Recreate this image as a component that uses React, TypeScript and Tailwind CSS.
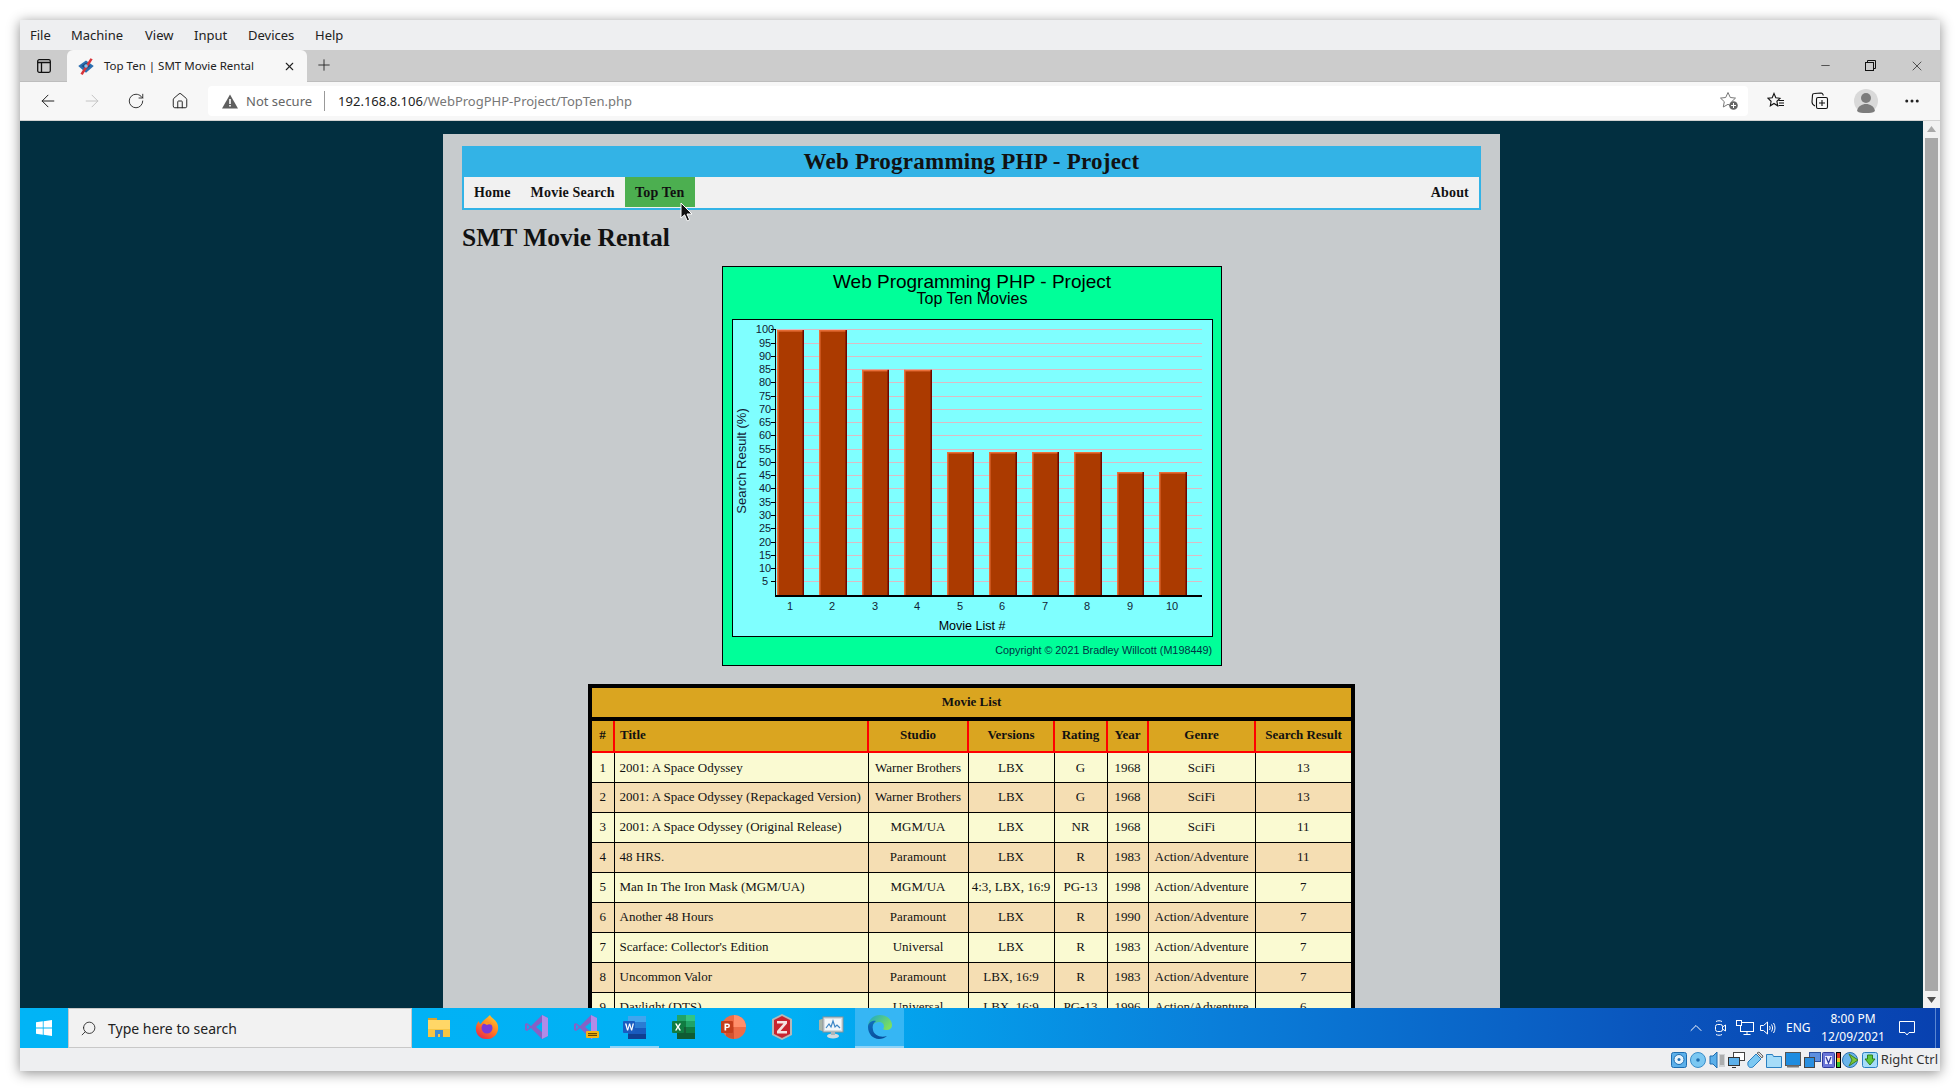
import React from 'react';
import { ArrowLeft, ArrowRight, RotateCw, Home, Plus, X, Minus, Search, ChevronUp, MoreHorizontal } from 'lucide-react';

const menuItems = [
  { label: 'File', cls: 'w-[41px]' },
  { label: 'Machine', cls: 'w-[74px]' },
  { label: 'View', cls: 'w-[49px]' },
  { label: 'Input', cls: 'w-[54px]' },
  { label: 'Devices', cls: 'w-[67px]' },
  { label: 'Help', cls: 'w-[40px]' },
];

const movies = [
  ['1', '2001: A Space Odyssey', 'Warner Brothers', 'LBX', 'G', '1968', 'SciFi', '13'],
  ['2', '2001: A Space Odyssey (Repackaged Version)', 'Warner Brothers', 'LBX', 'G', '1968', 'SciFi', '13'],
  ['3', '2001: A Space Odyssey (Original Release)', 'MGM/UA', 'LBX', 'NR', '1968', 'SciFi', '11'],
  ['4', '48 HRS.', 'Paramount', 'LBX', 'R', '1983', 'Action/Adventure', '11'],
  ['5', 'Man In The Iron Mask (MGM/UA)', 'MGM/UA', '4:3, LBX, 16:9', 'PG-13', '1998', 'Action/Adventure', '7'],
  ['6', 'Another 48 Hours', 'Paramount', 'LBX', 'R', '1990', 'Action/Adventure', '7'],
  ['7', "Scarface: Collector's Edition", 'Universal', 'LBX', 'R', '1983', 'Action/Adventure', '7'],
  ['8', 'Uncommon Valor', 'Paramount', 'LBX, 16:9', 'R', '1983', 'Action/Adventure', '7'],
  ['9', 'Daylight (DTS)', 'Universal', 'LBX, 16:9', 'PG-13', '1996', 'Action/Adventure', '6'],
];

const headers = ['#', 'Title', 'Studio', 'Versions', 'Rating', 'Year', 'Genre', 'Search Result'];
const colWidths = ['w-[22px]', 'w-[254px]', 'w-[100px]', 'w-[86px]', 'w-[53px]', 'w-[41px]', 'w-[107px]', 'w-[96px]'];

const bars = [
  { x: 55, w: 27, v: 99.7 },
  { x: 97, w: 28, v: 99.7 },
  { x: 140, w: 27, v: 84.7 },
  { x: 182, w: 28, v: 84.7 },
  { x: 225, w: 27, v: 53.75 },
  { x: 267, w: 28, v: 53.75 },
  { x: 310, w: 27, v: 53.75 },
  { x: 352, w: 28, v: 53.75 },
  { x: 395, w: 27, v: 46.2 },
  { x: 437, w: 28, v: 46.2 },
];

const ticks = Array.from({ length: 20 }, (_, i) => (i + 1) * 5);
const yOf = (v: number) => 328.6 - v * 2.653;

function Chart() {
  return (
    <svg width="500" height="400" viewBox="0 0 500 400" className="block font-['Liberation_Sans',sans-serif]">
      <rect x="0.5" y="0.5" width="499" height="399" fill="#00ff99" stroke="#000" />
      <text x="250" y="22" textAnchor="middle" fontSize="19" fill="#000">Web Programming PHP - Project</text>
      <text x="250" y="38" textAnchor="middle" fontSize="16" fill="#000">Top Ten Movies</text>
      <rect x="10.5" y="53.5" width="480" height="317" fill="#7fffff" stroke="#000" />
      {ticks.map((t) => (
        <g key={t}>
          <line x1="49" x2="480" y1={Math.round(yOf(t)) + 0.5} y2={Math.round(yOf(t)) + 0.5} stroke="#dcbcc4" />
          <line x1="49" x2="53" y1={Math.round(yOf(t)) + 0.5} y2={Math.round(yOf(t)) + 0.5} stroke="#000" />
          <text x="43" y={yOf(t) + 4} textAnchor="middle" fontSize="11" fill="#123">{t}</text>
        </g>
      ))}
      {bars.map((b, i) => {
        const top = yOf(b.v);
        return (
          <g key={i}>
            <rect x={b.x} y={top} width={b.w} height={329 - top} fill="#ab3a00" />
            <rect x={b.x} y={top} width={b.w} height="1.5" fill="#ea6f38" />
            <rect x={b.x} y={top} width="1.5" height={329 - top} fill="#ea6f38" />
            <rect x={b.x + b.w - 1.5} y={top} width="1.5" height={329 - top} fill="#6e0800" />
            <text x={b.x + 13} y="344" textAnchor="middle" fontSize="11" fill="#123">{i + 1}</text>
          </g>
        );
      })}
      <line x1="53.5" x2="53.5" y1="63" y2="330" stroke="#000" />
      <rect x="53" y="329" width="427" height="2" fill="#000" />
      <text x="250" y="364" textAnchor="middle" fontSize="12.5" fill="#000">Movie List #</text>
      <text transform="translate(24 195) rotate(-90)" textAnchor="middle" fontSize="13" fill="#123">Search Result (%)</text>
      <text x="490" y="388" textAnchor="end" fontSize="10.8" fill="#034">Copyright © 2021 Bradley Willcott (M198449)</text>
    </svg>
  );
}

function MovieTable() {
  return (
    <div className="w-[767px] mx-auto mt-[18px] border-4 border-black bg-black font-['Liberation_Serif',serif] text-[13px] text-[#111]">
      <div className="h-[29px] mb-1 pb-[2px] bg-[#daa520] flex items-center justify-center font-bold">Movie List</div>
      <table className="w-full table-fixed border-collapse">
        <colgroup>
          {colWidths.map((c, i) => (
            <col key={i} className={c} />
          ))}
        </colgroup>
        <thead>
          <tr className="h-[31px] bg-[#daa520]">
            {headers.map((h, i) => (
              <th
                key={h}
                className={`border-b-2 border-b-[#ff0000] p-0 pb-[2px] font-bold border-r-2 border-r-[#ff0000] last:border-r-0 ${i === 1 ? 'text-left pl-[5px]' : 'text-center'}`}
              >
                {h}
              </th>
            ))}
          </tr>
        </thead>
        <tbody>
          {movies.map((row, r) => (
            <tr key={r} className={`h-[30px] ${r === 1 || r === 3 || r === 5 || r === 7 ? 'bg-[#f5deb3]' : 'bg-[#fafad2]'}`}>
              {row.map((c, i) => (
                <td
                  key={i}
                  className={`p-0 border-b border-b-black border-r border-r-black last:border-r-0 whitespace-nowrap ${i === 1 ? 'text-left pl-[5px]' : 'text-center'}`}
                >
                  {c}
                </td>
              ))}
            </tr>
          ))}
        </tbody>
      </table>
    </div>
  );
}

function Cursor() {
  return (
    <svg className="absolute left-[55px] top-[25px]" width="13" height="20" viewBox="0 0 13 20">
      <path d="M1 1v15l3.6-3.2 2.6 6 2.4-1-2.6-5.8H12z" fill="#111" stroke="#fff" strokeWidth="1" />
    </svg>
  );
}

function Page() {
  return (
    <div className="w-[1057px] mx-auto mt-[13px] px-[19px] pt-3 pb-10 bg-[#c7cbcd] font-['Liberation_Serif',serif] text-[#111]">
      <div className="h-[31px] pt-[2px] bg-[#33b3e6] flex items-center justify-center font-bold text-[23px] tracking-[0.25px]">
        Web Programming PHP - Project
      </div>
      <nav className="h-[33px] pb-[1px] bg-[#f1f1f1] border-2 border-t-0 border-[#33b3e6] flex font-bold text-[14px] tracking-[0.2px]">
        <a className="px-2.5 flex items-center">Home</a>
        <a className="px-2.5 flex items-center">Movie Search</a>
        <a className="relative w-[70px] justify-center bg-[#4caf50] flex items-center">
          Top Ten
          <Cursor />
        </a>
        <a className="ml-auto px-2.5 flex items-center">About</a>
      </nav>
      <h1 className="mt-[15px] h-[26px] leading-[26px] font-bold text-[25.5px]">SMT Movie Rental</h1>
      <div className="w-[500px] mx-auto mt-[15px]">
        <Chart />
      </div>
      <MovieTable />
    </div>
  );
}

function TabIcon() {
  return (
    <svg width="18" height="20" viewBox="0 0 16 18">
      <path d="M1 9l7-5 7 5-7 6z" fill="#2c6fb0" />
      <path d="M4 9l4-3 4 3-4 3z" fill="#1a4a80" />
      <path d="M3 16L12 2l2 1L5 17z" fill="#d8343a" />
      <circle cx="8" cy="9" r="1.6" fill="#7fc4f0" />
    </svg>
  );
}

function FolderIcon() {
  return (
    <svg width="24" height="24" viewBox="0 0 24 24">
      <path d="M1 3h9v3H1z" fill="#d8a22c" />
      <path d="M1 5h22v17H1z" fill="#ffd767" />
      <path d="M1 14h22v8H1z" fill="#f6c544" />
      <path d="M8 15h8v7h-3v-3h-2v3H8z" fill="#3a8fd6" />
    </svg>
  );
}

function FirefoxIcon() {
  return (
    <svg width="26" height="26" viewBox="0 0 26 26">
      <defs>
        <linearGradient id="ff" x1="0.8" y1="0" x2="0.2" y2="1">
          <stop offset="0" stopColor="#ffcb2e" />
          <stop offset="0.5" stopColor="#ff7a22" />
          <stop offset="1" stopColor="#e8254e" />
        </linearGradient>
      </defs>
      <path d="M15 1c1 3 5 4 7 8 3 6 0 15-9 16S0 19 1 13c.3-2 1-4 3-6 0 2 1 3 2 3 1-3 5-5 9-9z" fill="url(#ff)" />
      <circle cx="12" cy="14" r="5.5" fill="#7b39d8" />
      <path d="M8 9c3-2 7-1 9 2-2-1-4-1-5 0z" fill="#ff9a1f" />
    </svg>
  );
}

function VsIcon({ pre }: { pre?: boolean }) {
  return (
    <svg width="26" height="26" viewBox="0 0 26 26">
      <path d="M18 1l6 3v18l-6 3-11-11-4 3-2-1V10l2-1 4 3z" fill="#8661c5" />
      <path d="M18 1l6 3v18l-6 3z" fill="#b18be8" />
      <path d="M18 8v10l-6-5z" fill="#00b4f5" />
      <path d="M3 10.5v5l2.5-2.5z" fill="#00b4f5" />
      {pre && <rect x="13" y="17" width="13" height="7" rx="1" fill="#f5b316" />}
      {pre && <path d="M15 19h9v1.2h-9zM15 21h9v1h-9z" fill="#6b4b00" />}
    </svg>
  );
}

function WordIcon() {
  return (
    <svg width="26" height="26" viewBox="0 0 26 26">
      <path d="M6 2h18v6H6z" fill="#41a5ee" />
      <path d="M6 8h18v6H6z" fill="#2b7cd3" />
      <path d="M6 14h18v6H6z" fill="#185abd" />
      <path d="M6 20h18v5H6z" fill="#103f91" />
      <rect x="1" y="7" width="12" height="12" rx="1" fill="#1a5cc0" />
      <path d="M3 9.5h1.500l1.200 5 1.300-5h1.200l1.300 5 1.100-5H12l-1.800 7H9l-1.400-4.700L6.200 16.500H5z" fill="#fff" />
    </svg>
  );
}

function ExcelIcon() {
  return (
    <svg width="26" height="26" viewBox="0 0 26 26">
      <path d="M6 1h9v6H6z" fill="#21a366" />
      <path d="M15 1h9v6h-9z" fill="#33c481" />
      <path d="M6 7h9v6H6z" fill="#107c41" />
      <path d="M15 7h9v6h-9z" fill="#21a366" />
      <path d="M6 13h9v6H6z" fill="#185c37" />
      <path d="M15 13h9v6h-9z" fill="#107c41" />
      <path d="M6 19h18v6H6z" fill="#0f5b33" />
      <rect x="1" y="7" width="12" height="12" rx="1" fill="#107c41" />
      <path d="M4 9.500h1.800L7 12l1.300-2.500H10L8 13l2 3.500H8.200L7 14l-1.300 2.500H4L6 13z" fill="#fff" />
    </svg>
  );
}

function PowerPointIcon() {
  return (
    <svg width="26" height="26" viewBox="0 0 26 26">
      <circle cx="14" cy="13" r="12" fill="#ed6c47" />
      <path d="M14 1a12 12 0 0 1 12 12H14z" fill="#ff8f6b" />
      <path d="M14 25a12 12 0 0 1-8-3V13h8z" fill="#d35230" />
      <rect x="1" y="7" width="12" height="12" rx="1" fill="#c43e1c" />
      <path d="M4.500 9.500h3.200a2.300 2.300 0 0 1 0 4.600H6.200v2.400H4.500zm1.700 1.400v1.800h1.300a.9.9 0 0 0 0-1.800z" fill="#fff" />
    </svg>
  );
}

function ZoteroIcon() {
  return (
    <svg width="24" height="28" viewBox="0 0 24 28">
      <path d="M12 1l10 5v16l-10 5-10-5V6z" fill="#b7b7b7" />
      <path d="M12 3l8 4v14l-8 4-8-4V7z" fill="#c8242f" />
      <path d="M7 8h10v2.500L10.500 18H17v2.500H7V18l6.500-7.500H7z" fill="#f4e3e3" />
    </svg>
  );
}

function MonitorIcon() {
  return (
    <svg width="26" height="26" viewBox="0 0 26 26">
      <path d="M1 6l6-2v14l-6-2z" fill="#a8b4a8" />
      <rect x="5" y="3" width="20" height="15" fill="#d8dde0" stroke="#8a9298" />
      <rect x="7" y="5" width="16" height="11" fill="#f2f7fa" />
      <path d="M8 14l3-4 2 3 2-6 2 6 2-2 3 3" fill="none" stroke="#3c86c6" strokeWidth="1.2" />
      <ellipse cx="15" cy="22" rx="6" ry="2.500" fill="#d5d9dc" />
      <path d="M13 18h4v3h-4z" fill="#aeb5ba" />
    </svg>
  );
}

function EdgeIcon() {
  return (
    <svg width="26" height="26" viewBox="0 0 26 26">
      <defs>
        <linearGradient id="edgeb" x1="0" y1="0" x2="0.3" y2="1">
          <stop offset="0" stopColor="#0f6fc0" />
          <stop offset="1" stopColor="#0a4f9c" />
        </linearGradient>
        <linearGradient id="edgeg" x1="0" y1="0" x2="1" y2="0.6">
          <stop offset="0" stopColor="#1aa7c9" />
          <stop offset="1" stopColor="#7ee05d" />
        </linearGradient>
      </defs>
      <path d="M1 13C1 6 6 1 13 1c7 0 12 5 12 10 0 4-3 5-6 5-2 0-3-1-3-1 2-2 1-7-4-7-5 0-8 4-8 9" fill="url(#edgeg)" />
      <path d="M1 13c0-4 4-7 8-6-3 2-4 5-3 9 1 5 7 8 14 6-2 2-5 3-8 3C6 25 1 20 1 13z" fill="url(#edgeb)" />
    </svg>
  );
}

function WindowsLogo() {
  return (
    <svg width="16" height="16" viewBox="0 0 16 16" fill="#fff">
      <path d="M0 2.300L6.800 1.300v6.300H0zM7.600 1.200L16 0v7.600H7.600zM0 8.400h6.800v6.300L0 13.700zM7.600 8.400H16V16l-8.400-1.200z" />
    </svg>
  );
}

const taskItems = [
  { key: 'folder', icon: <FolderIcon /> },
  { key: 'firefox', icon: <FirefoxIcon /> },
  { key: 'vs', icon: <VsIcon /> },
  { key: 'vspre', icon: <VsIcon pre /> },
  { key: 'word', icon: <WordIcon />, open: true },
  { key: 'excel', icon: <ExcelIcon /> },
  { key: 'ppt', icon: <PowerPointIcon /> },
  { key: 'zotero', icon: <ZoteroIcon /> },
  { key: 'monitor', icon: <MonitorIcon /> },
  { key: 'edge', icon: <EdgeIcon />, active: true },
];

function Taskbar() {
  return (
    <div className="h-10 flex text-white bg-[linear-gradient(90deg,#01b4f6_0%,#01b0f4_40%,#0a7fda_62%,#0a55bd_85%,#0841b0_100%)]">
      <div className="w-[48px] flex items-center justify-center">
        <WindowsLogo />
      </div>
      <div className="w-[344px] bg-[#f2f2f2] border border-[#c8c8c8] flex items-center pl-[11px] gap-[11px] text-[#222] text-[14px] font-['Noto_Sans',sans-serif]">
        <Search size={17} strokeWidth={1.2} className="-scale-x-100" />
        Type here to search
      </div>
      <div className="flex ml-[2px]">
        {taskItems.map((t) => (
          <div
            key={t.key}
            className={`w-[49px] flex items-center justify-center border-b-[2px] ${t.active ? 'bg-[#36b6f4] border-b-[#8fd3f7]' : t.open ? 'border-b-[#8fd3f7]' : 'border-b-transparent'}`}
          >
            {t.icon}
          </div>
        ))}
      </div>
      <div className="ml-auto flex items-center font-['Noto_Sans',sans-serif]">
        <ChevronUp size={20} strokeWidth={1.2} />
        <svg className="ml-[6px]" width="18" height="18" viewBox="0 0 18 18" fill="none" stroke="#fff">
          <rect x="3.500" y="5.500" width="7" height="7" rx="2" />
          <path d="M10.500 8l3-2v6l-3-2M4 2.500c2-1 4-1 6 0M4 15.500c2 1 4 1 6 0" />
        </svg>
        <svg className="ml-[6px]" width="18" height="18" viewBox="0 0 18 18" fill="none" stroke="#fff">
          <rect x="4.500" y="3.500" width="13" height="9" />
          <rect x="0.500" y="1.500" width="5" height="5" fill="#0a4ab5" />
          <path d="M11 12.500v3M7.500 15.500h7" />
        </svg>
        <svg className="ml-[5px]" width="18" height="18" viewBox="0 0 18 18" fill="none" stroke="#fff">
          <path d="M1.500 6.500h3l4-3.500v12l-4-3.500h-3z" />
          <path d="M10.500 7c.8 1.200.8 2.800 0 4M12.500 5.500c1.400 2 1.400 5 0 7M14.500 4c2 3 2 7 0 10" />
        </svg>
        <span className="ml-[9px] w-[22px] text-[12px]">ENG</span>
        <div className="ml-[13px] w-[64px] text-[12px] text-center leading-[18px] whitespace-nowrap flex flex-col items-center">
          <span>8:00 PM</span>
          <span>12/09/2021</span>
        </div>
        <svg className="ml-[13px]" width="18" height="18" viewBox="0 0 18 18" fill="none" stroke="#fff">
          <path d="M1.500 2.500h15v11H11l-2 2.500-2-2.500H1.500z" />
        </svg>
        <div className="ml-[19px] h-full w-[5px] border-l border-l-[#5b87d2]" />
      </div>
    </div>
  );
}

function StatusIcons() {
  return (
    <div className="flex items-center gap-[1px]">
      <svg width="18" height="18" viewBox="0 0 18 18">
        <rect x="1.500" y="1.500" width="15" height="15" rx="2" fill="#5cb0ea" stroke="#1e6db0" />
        <circle cx="9" cy="8.500" r="5" fill="#e8f4fc" stroke="#1e6db0" />
        <circle cx="9" cy="8.500" r="1.500" fill="#1e6db0" />
      </svg>
      <svg width="18" height="18" viewBox="0 0 18 18">
        <circle cx="9" cy="9" r="7.500" fill="#7cc8f2" stroke="#3a8dc8" />
        <circle cx="9" cy="9" r="1.800" fill="#1e6db0" />
      </svg>
      <svg width="18" height="18" viewBox="0 0 18 18">
        <path d="M2 5h3l4-4v16l-4-4H2z" fill="#5cb0ea" stroke="#1e6db0" />
        <path d="M11 3h6v13h-6z" fill="#cfd2d4" />
        <path d="M12 5h4M12 7h4M12 9h4M12 11h4M12 13h4" stroke="#888" />
      </svg>
      <svg width="18" height="18" viewBox="0 0 18 18">
        <rect x="6.500" y="1.500" width="11" height="8" fill="#fff" stroke="#444" />
        <rect x="1.500" y="6.500" width="11" height="8" fill="#5cb0ea" stroke="#333" />
        <path d="M5 16.500h4" stroke="#333" />
      </svg>
      <svg width="18" height="18" viewBox="0 0 18 18">
        <path d="M2 11L10 3l5 5-8 8c-2 1-6 1-5-5z" fill="#7cc8f2" stroke="#2a7fc0" />
        <path d="M11 2l2-1 4 4-1 2z" fill="#d8d8d8" stroke="#666" />
      </svg>
      <svg width="18" height="18" viewBox="0 0 18 18">
        <path d="M1.500 16.500v-13h6l1 2h8v11z" fill="#a6dcf8" stroke="#2a7fc0" />
      </svg>
      <svg width="18" height="18" viewBox="0 0 18 18">
        <rect x="1.500" y="1.500" width="15" height="13" fill="#1e8ce0" stroke="#555" />
        <path d="M3 15.500h12" stroke="#777" strokeWidth="2" />
      </svg>
      <svg width="18" height="18" viewBox="0 0 18 18">
        <rect x="6.500" y="1.500" width="11" height="9" fill="#5d8fe0" stroke="#2a4f9c" />
        <rect x="1.500" y="6.500" width="10" height="10" fill="#2a8fe0" stroke="#444" />
      </svg>
      <svg width="13" height="18" viewBox="0 0 13 18">
        <rect x="0.500" y="1.500" width="12" height="15" rx="1" fill="#6a76d8" stroke="#2f3a9c" />
        <rect x="3" y="5" width="7" height="8" fill="#eef" />
        <path d="M4 6l2.500 6L9 6" fill="none" stroke="#2f3a9c" strokeWidth="1.300" />
      </svg>
      <svg width="5" height="16" viewBox="0 0 5 16">
        <rect width="5" height="16" fill="#000" />
        <rect x="1" y="1" width="3" height="5" fill="#e03020" />
        <rect x="1" y="6" width="3" height="4" fill="#f0c020" />
        <rect x="1" y="10" width="3" height="5" fill="#30c030" />
      </svg>
      <svg width="18" height="18" viewBox="0 0 18 18">
        <circle cx="8" cy="9" r="7.500" fill="#6ab4ea" stroke="#2a70b0" />
        <path d="M7 3l9 6-9 6 3-6z" fill="#7ac83a" stroke="#3f7f1e" />
      </svg>
      <svg width="18" height="18" viewBox="0 0 18 18">
        <rect x="1.500" y="1.500" width="15" height="15" rx="2" fill="#a6dcf8" stroke="#2a7fc0" />
        <path d="M6.500 4h5v4H14l-5 6-5-6h2.500z" fill="#5ec83a" stroke="#2f7f1e" />
      </svg>
    </div>
  );
}

export default function App() {
  return (
    <div className="w-[1960px] h-[1091px] overflow-hidden bg-white pt-5 pl-5">
      <div className="w-[1920px] h-[1051px] flex flex-col shadow-[0_2px_12px_rgba(0,0,0,0.45)] font-['Noto_Sans',sans-serif] text-[#222]">
        <div className="h-[30px] shrink-0 pt-[2px] bg-[#eeeff1] flex items-center pl-[10px] text-[13px]">
          {menuItems.map((m) => (
            <span key={m.label} className={m.cls}>{m.label}</span>
          ))}
        </div>

        <div className="h-[32px] shrink-0 bg-[#cccccc] flex border-b border-b-[#bdbdbd]">
          <div className="w-[47px] flex items-center justify-center">
            <svg width="14" height="14" viewBox="0 0 14 14" fill="none" stroke="#111" strokeWidth="1.300">
              <rect x="0.700" y="0.700" width="12.600" height="12.600" rx="1.500" />
              <path d="M0.700 3.500h12.600M4.500 3.500v9.800" />
            </svg>
          </div>
          <div className="w-[240px] h-[32px] bg-[#f7f7f7] rounded-t-md flex items-center pl-[10px] text-[11.5px]">
            <TabIcon />
            <span className="ml-[9px] w-[179px] whitespace-nowrap">Top Ten | SMT Movie Rental</span>
            <X size={13} strokeWidth={2} className="text-[#222]" />
          </div>
          <Plus size={18} strokeWidth={1.2} className="ml-2 mt-[6px] text-[#222]" />
          <div className="ml-auto flex items-center text-[#111]">
            <Minus size={13} strokeWidth={1.2} className="mr-[33px]" />
            <svg className="mr-[33px]" width="11" height="11" viewBox="0 0 11 11" fill="none" stroke="#111">
              <rect x="0.500" y="2.500" width="8" height="8" />
              <path d="M2.500 2.500v-2h8v8h-2" />
            </svg>
            <X size={16} strokeWidth={1} className="mr-[15px]" />
          </div>
        </div>

        <div className="h-[39px] shrink-0 bg-[#f7f7f7] border-b border-b-[#d2d2d2] flex items-center">
          <ArrowLeft size={20} strokeWidth={1.2} className="ml-[18px] text-[#222]" />
          <ArrowRight size={20} strokeWidth={1.2} className="ml-[24px] text-[#c4c4c4]" />
          <RotateCw size={18} strokeWidth={1.2} className="ml-[25px] text-[#222]" />
          <Home size={18} strokeWidth={1.3} className="ml-[26px] text-[#222]" />
          <div className="ml-[19px] w-[1540px] h-[30px] bg-white rounded flex items-center pl-[14px] text-[13px]">
            <svg width="16" height="15" viewBox="0 0 16 15">
              <path d="M8 0.500L16 14.500H0z" fill="#5f5f5f" />
              <path d="M7.200 5h1.600v5H7.200zM7.200 11h1.600v1.600H7.200z" fill="#fff" />
            </svg>
            <span className="ml-[8px] mt-[2px] text-[#666]">Not secure</span>
            <span className="ml-[12px] h-[20px] border-l border-l-[#999]" />
            <span className="ml-[13px] mt-[2px] text-[#222]">192.168.8.106</span>
            <span className="mt-[2px] text-[#777]">/WebProgPHP-Project/TopTen.php</span>
            <svg className="ml-auto mr-[9px]" width="20" height="20" viewBox="0 0 20 20">
              <path d="M9 1.500l2.300 5 5.200.6-3.800 3.600 1 5.300L9 13.300 4.300 16l1-5.300L1.500 7.100l5.200-.6z" fill="none" stroke="#777" />
              <circle cx="14.500" cy="14.500" r="4.300" fill="#666" />
              <path d="M14.500 12v5M12 14.500h5" stroke="#fff" />
            </svg>
          </div>
          <svg className="ml-[19px]" width="18" height="18" viewBox="0 0 18 18" fill="none" stroke="#111" strokeWidth="1.100">
            <path d="M7 1.500l1.800 4.300 4.200.5-3.100 3 .8 4.500L7 11.500l-3.700 2.300.8-4.500L1 6.300l4.200-.5z" />
            <path d="M11.500 8.500h5.500M12 11h5M11.500 13.500h5.500" />
          </svg>
          <svg className="ml-[26px]" width="18" height="18" viewBox="0 0 18 18" fill="none" stroke="#111" strokeWidth="1.100">
            <path d="M4 14c-2-1-3-2-3-4l.5-7c0-1 1-1.500 2-1.500L10 1c1.500 0 2 1 2.300 2.500" />
            <rect x="5.500" y="5.500" width="11" height="11" rx="1.500" />
            <path d="M11 8v6M8 11h6" />
          </svg>
          <svg className="ml-[25px]" width="24" height="24" viewBox="0 0 24 24">
            <circle cx="12" cy="12" r="12" fill="#d9d9d9" />
            <circle cx="12" cy="9" r="5" fill="#7c7c7c" />
            <path d="M3 22c1-5 5-7 9-7s8 2 9 7c-2 2-5 2-9 2s-7 0-9-2z" fill="#7c7c7c" />
          </svg>
          <MoreHorizontal size={18} strokeWidth={2} className="ml-[25px] text-[#222]" />
        </div>

        <div className="flex-1 min-h-0 flex overflow-hidden bg-[#022f40]">
          <div className="flex-1 min-w-0">
            <Page />
          </div>
          <div className="w-[17px] bg-[#f1f1f1] flex flex-col items-center">
            <svg className="mt-[5px]" width="9" height="6" viewBox="0 0 9 6">
              <path d="M0 6L4.500 0 9 6z" fill="#a8a8a8" />
            </svg>
            <div className="mt-[6px] w-[13px] h-[853px] bg-[#a8a8a8]" />
            <svg className="mt-[6px]" width="9" height="6" viewBox="0 0 9 6">
              <path d="M0 0L4.500 6 9 0z" fill="#505050" />
            </svg>
          </div>
        </div>

        <div className="shrink-0">
          <Taskbar />
        </div>

        <div className="h-[23px] shrink-0 bg-[#eeeff1] flex items-center justify-end pr-[2px] text-[13px] text-[#333] gap-[2px]">
          <StatusIcons />
          <span className="whitespace-nowrap">Right Ctrl</span>
        </div>
      </div>
    </div>
  );
}
